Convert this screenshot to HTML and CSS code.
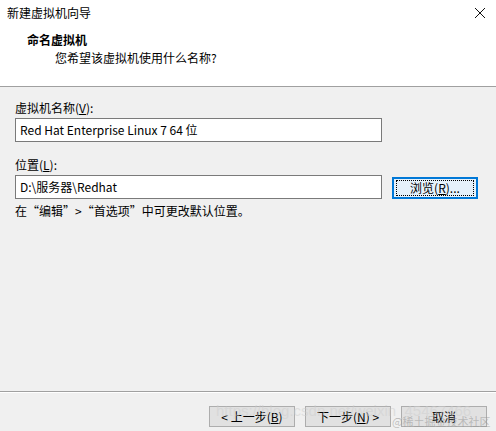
FILE: index.html
```html
<!DOCTYPE html>
<html lang="zh">
<head>
<meta charset="utf-8">
<link rel="stylesheet" href="styles.css">
</head>
<body>
<div class="dialog">
  <div class="titlebar">
    <span class="title">新建虚拟机向导</span>
    <svg class="close" width="12" height="12" viewBox="0 0 12 12"><path d="M1 1 L11 11 M11 1 L1 11" stroke="#111" stroke-width="1"/></svg>
  </div>
  <div class="header">
    <div class="h-title">命名虚拟机</div>
    <div class="h-sub">您希望该虚拟机使用什么名称?</div>
  </div>
  <div class="body">
    <div class="label">虚拟机名称(<u>V</u>):</div>
    <div class="input wide">Red Hat Enterprise Linux 7 64 位</div>
    <div class="label l2">位置(<u>L</u>):</div>
    <div class="row">
      <div class="input wide">D:\服务器\Redhat</div>
      <div class="btn browse"><span class="focus">浏览(<u>R</u>)...</span></div>
    </div>
    <div class="hint">在“编辑”&gt;“首选项”中可更改默认位置。</div>
  </div>
  <div class="footer">
    <div class="btn">&lt; 上一步(<u>B</u>)</div>
    <div class="btn">下一步(<u>N</u>) &gt;</div>
    <div class="btn">取消</div>
  </div>
  <div class="wm wm1">https://blog.csdn.net/weixin_45467466</div>
  <div class="wm wm2">@稀土掘金技术社区</div>
</div>
</body>
</html>
```
FILE: styles.css
```css
* { box-sizing: border-box; }
html, body { margin: 0; padding: 0; }
body {
  width: 496px; height: 431px; overflow: hidden;
  font-family: "Noto Sans CJK SC", "Microsoft YaHei", sans-serif;
  font-size: 12px; color: #000; background: #f0f0f0;
}
.dialog { position: relative; width: 496px; height: 431px; display: flex; flex-direction: column; }
.titlebar {
  height: 30px; background: #fff; display: flex; align-items: center;
  justify-content: space-between; padding: 0 10px 0 7px;
}
.title { font-size: 12px; line-height: 16px; margin-top: -4px; }
.close { margin-top: -4px; }
.header {
  height: 57px; background: #fff; border-bottom: 1px solid #a0a0a0;
  padding: 2px 0 0 27px;
}
.h-title { font-weight: bold; font-size: 12px; line-height: 16px; }
.h-sub { padding-left: 28px; line-height: 16px; margin-top: 2px; }
.body { flex: 1; padding: 12px 15px 0 15px; border-top: 1px solid #f0f0f0; }
.label { line-height: 16px; height: 18px; padding-top: 0; }
.l2 { margin-top: 15px; }
.input {
  height: 24px; border: 1px solid #7a7a7a; background: #fff;
  padding: 0 4px; line-height: 21px; font-size: 12px;
}
.wide { width: 367px; }
.row { display: flex; align-items: center; gap: 10px; }
.btn {
  height: 22px; width: 86px; border: 1px solid #adadad; background: #e1e1e1;
  display: flex; align-items: center; justify-content: center; font-size: 12px;
}
.browse { border: 2px solid #0078d7; background: #e5f1fb; margin-top: 1px; }
.browse .focus {
  border: 1px dotted #000; width: 78px; height: 16px;
  display: flex; align-items: center; justify-content: center;
}
.hint { margin-top: 4px; line-height: 16px; }
.footer {
  height: 40px; border-top: 1px solid #a0a0a0; box-shadow: inset 0 1px 0 #fff;
  display: flex; justify-content: flex-end; align-items: flex-start;
  gap: 10px; padding: 14px 9px 0 0;
}
.footer .btn { height: 21px; }
.wm { position: absolute; pointer-events: none; white-space: nowrap; }
.wm1 {
  left: 216px; top: 402px; font-size: 15px; line-height: 18px;
  font-family: "Liberation Sans", sans-serif; color: rgba(205,205,205,0.5);
}
.wm2 {
  left: 392px; top: 414px; font-size: 11px; line-height: 14px;
  color: rgba(150,150,150,0.55);
}
```
